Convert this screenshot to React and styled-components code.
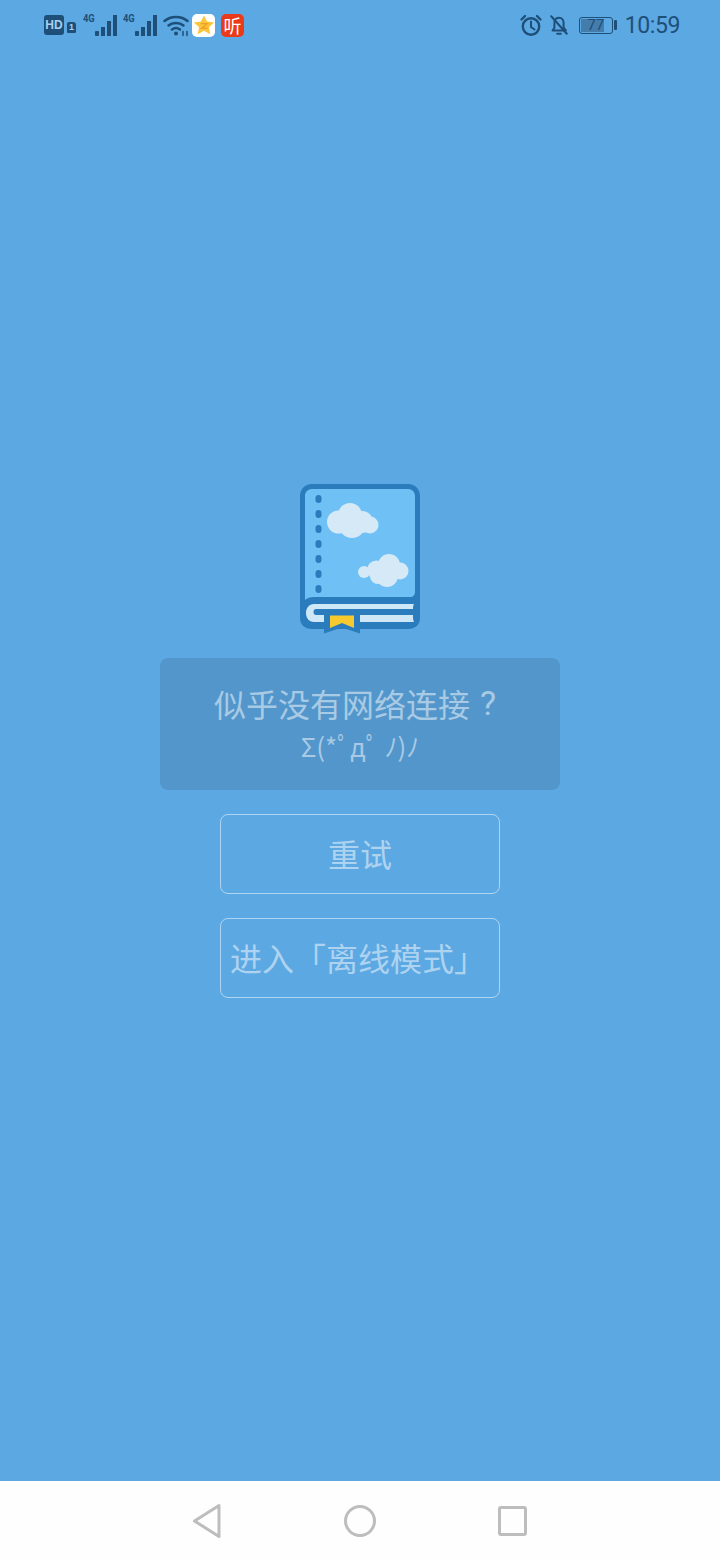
import styled, { createGlobalStyle } from 'styled-components';

const GlobalStyle = createGlobalStyle`
    html, body {
        margin: 0;
        padding: 0;
        background: #5ca8e2;
    }
`;

const CJK = `"Noto Sans CJK SC", "Noto Sans", sans-serif`;

const BookIcon = () => (
    <BookSvg width="120" height="150" viewBox="0 0 120 150">
        <path d="M12 0h96c7 0 12 5 12 12v122c0 7-5 11-12 11H12c-7 0-12-4-12-11V12C0 5 5 0 12 0z" fill="#2a7cbd" />
        <path d="M12 5h96c4 0 7 3 7 7v96c0 3-2 5-5 5H14c-4 0-7 1-9 3V12c0-4 3-7 7-7z" fill="#6fc0f5" />
        {[15, 30, 45, 60, 75, 90, 105].map((y) => (
            <rect key={y} x="15.500" y={y - 4} width="6" height="8" rx="3" fill="#2a7cbd" />
        ))}
        <g fill="#d5e9f7">
            <circle cx="38.500" cy="38" r="11.500" />
            <circle cx="50" cy="31" r="12" />
            <circle cx="52" cy="41" r="13" />
            <circle cx="62" cy="38" r="11" />
            <circle cx="70" cy="41" r="8.500" />
            <circle cx="64" cy="88" r="6" />
            <circle cx="76.500" cy="86" r="9.500" />
            <circle cx="89" cy="81" r="11" />
            <circle cx="78" cy="92" r="8" />
            <circle cx="87" cy="92" r="11" />
            <circle cx="100" cy="87" r="8.500" />
        </g>
        <path
            d="M114 120H14C9 120 6 124 6 129C6 134 9 138 14 138H24V131H16C14.500 131 13.500 130 13.500 128C13.500 126 14.500 125 16 125H113C113 123 113 122 114 120Z"
            fill="#cfe8f8"
        />
        <path d="M60 131H113C113 134 113 136 114 138H60Z" fill="#cfe8f8" />
        <path d="M24 128h36v21.500l-18-6-18 6z" fill="#2a7cbd" />
        <path d="M30 131.500h24v12.500l-12-5-12 5z" fill="#f6c92f" />
    </BookSvg>
);

const Signal = () => (
    <SignalWrap>
        <SmallTag>4G</SmallTag>
        <svg width="22" height="22" viewBox="0 0 22 22">
            <rect x="0" y="16" width="4" height="5" rx="1" fill="#1e4f78" />
            <rect x="6" y="12" width="4" height="9" fill="#1e4f78" />
            <rect x="12" y="6" width="4" height="15" fill="#1e4f78" />
            <rect x="18" y="0" width="4" height="21" fill="#1e4f78" />
        </svg>
    </SignalWrap>
);

const App = () => {
    return (
        <Screen>
            <GlobalStyle />
            <StatusBar>
                <LeftGroup>
                    <HdBadge>HD</HdBadge>
                    <SimTag>1</SimTag>
                    <Signal />
                    <Signal />
                    <WifiSvg width="26" height="24" viewBox="0 0 26 24" fill="none" stroke="#1e4f78" strokeWidth="2.500" strokeLinecap="round">
                        <path d="M1.500 8C7.500 2.500 18.500 2.500 24.500 8" />
                        <path d="M5.500 12.500c4-3.500 11-3.500 15 0" />
                        <path d="M9 16.500c2.300-1.700 5.700-1.700 8 0" />
                        <circle cx="13" cy="20.500" r="2" fill="#1e4f78" stroke="none" />
                        <path d="M20 18.500v4M24 18.500v4" strokeWidth="1.500" />
                    </WifiSvg>
                    <StarApp>
                        <svg width="22" height="22" viewBox="0 0 24 24">
                            <path d="M12 1.500l3.300 6.800 7.700 1-5.600 5.200 1.500 7.500-6.900-3.700-6.900 3.700 1.500-7.500L1 9.300l7.700-1z" fill="#fbc63a" />
                            <path d="M8.500 10.500h7l-6 5h6.500" fill="none" stroke="#f0a02a" strokeWidth="1.500" />
                        </svg>
                    </StarApp>
                    <ListenApp>听</ListenApp>
                </LeftGroup>
                <RightGroup>
                    <AlarmSvg width="24" height="24" viewBox="0 0 24 24" fill="none" stroke="#1e4f78" strokeWidth="2.400" strokeLinecap="round">
                        <circle cx="12" cy="13.500" r="8.200" />
                        <path d="M12 8.500v5.500l3.500 2.500" strokeWidth="2" />
                        <path d="M2.500 6.500L6 3M21.500 6.500L18 3" />
                    </AlarmSvg>
                    <svg width="22" height="24" viewBox="0 0 24 24" fill="none" stroke="#1e4f78" strokeWidth="2.200" strokeLinecap="round" strokeLinejoin="round">
                        <path d="M7 8.500C7.500 6 9.500 4 12 4c3 0 5 2.500 5 5.500V15l2.500 3H5l2-3V10" />
                        <path d="M10 21.500h4" />
                        <path d="M3.500 2.500l17 19" />
                    </svg>
                    <BatteryWrap>
                        <Battery>
                            <BatteryFill style={{ width: '77%' }} />
                            <BatteryText>77</BatteryText>
                        </Battery>
                        <BatteryCap />
                    </BatteryWrap>
                    <Clock>10:59</Clock>
                </RightGroup>
            </StatusBar>

            <Main>
                <BookIcon />
                <MessageCard>
                    <MessageTitle>
                        似乎没有网络连接<QuestionMark>?</QuestionMark>
                    </MessageTitle>
                    <Kaomoji>Σ(*ﾟдﾟ ﾉ)ﾉ</Kaomoji>
                </MessageCard>
                <OutlineButton>重试</OutlineButton>
                <OutlineButton $shift={4}>进入「离线模式」</OutlineButton>
            </Main>

            <NavBar>
                <svg width="30" height="36" viewBox="0 0 30 36" fill="none" stroke="#bdbdbd" strokeWidth="3" strokeLinejoin="round">
                    <path d="M26 2.500v31L1.500 18z" />
                </svg>
                <svg width="34" height="34" viewBox="0 0 34 34" fill="none" stroke="#bdbdbd" strokeWidth="3">
                    <circle cx="17" cy="17" r="14.500" />
                </svg>
                <svg width="30" height="30" viewBox="0 0 30 30" fill="none" stroke="#bdbdbd" strokeWidth="3" strokeLinejoin="round">
                    <rect x="2.500" y="1.500" width="26" height="27" rx="1.500" />
                </svg>
            </NavBar>
        </Screen>
    );
};

export default App;

const Screen = styled.div`
    width: 720px;
    height: 1560px;
    display: flex;
    flex-direction: column;
    background-color: #5ca8e2;
    overflow: hidden;
`;

const StatusBar = styled.div`
    height: 50px;
    padding: 0 40px 0 44px;
    display: flex;
    align-items: center;
    justify-content: space-between;
    color: #1e4f78;
`;

const LeftGroup = styled.div`
    display: flex;
    align-items: center;
    gap: 6px;
`;

const RightGroup = styled.div`
    display: flex;
    align-items: center;
    gap: 7px;
`;

const WifiSvg = styled.svg`
    margin-right: -3px;
`;

const AlarmSvg = styled.svg`
    margin-right: -2px;
`;

const BookSvg = styled.svg`
    display: block;
`;

const HdBadge = styled.span`
    width: 20px;
    height: 20px;
    border-radius: 3px;
    background-color: #1e4f78;
    color: #a9d0ee;
    font: bold 12px 'Liberation Sans', sans-serif;
    display: flex;
    align-items: center;
    justify-content: center;
    margin-right: -3px;
`;

const SimTag = styled.span`
    width: 9px;
    height: 11px;
    margin-top: 5px;
    margin-right: 1px;
    border-radius: 2px 3px 1px 1px;
    background-color: #1e4f78;
    color: #a9d0ee;
    font: bold 9px/11px 'Liberation Sans', sans-serif;
    text-align: center;
`;

const SignalWrap = styled.span`
    display: flex;
    align-items: flex-end;
    height: 23px;
`;

const SmallTag = styled.span`
    font: bold 11px/10px 'Roboto', sans-serif;
    align-self: flex-start;
    margin-right: -1px;
    width: 13px;
    transform: scaleX(0.85);
    transform-origin: left;
`;

const StarApp = styled.span`
    width: 23px;
    height: 23px;
    border-radius: 5px;
    background-color: #fff;
    display: flex;
    align-items: center;
    justify-content: center;
`;

const ListenApp = styled.span`
    width: 23px;
    height: 23px;
    border-radius: 5px;
    background-color: #ea3a1a;
    color: #fff;
    font: 18px/23px ${CJK};
    text-align: center;
`;

const BatteryWrap = styled.span`
    display: flex;
    align-items: center;
    gap: 1px;
    margin-left: 2px;
`;

const Battery = styled.span`
    position: relative;
    box-sizing: border-box;
    width: 34px;
    height: 17px;
    border: 1.500px solid #1e4f78;
    border-radius: 3px;
    padding: 1px;
    display: block;
`;

const BatteryFill = styled.span`
    display: block;
    height: 100%;
    background-color: #447cab;
`;

const BatteryText = styled.span`
    position: absolute;
    inset: 0;
    font: 15px/14px 'Roboto', sans-serif;
    text-align: center;
    color: #1e4f78;
`;

const BatteryCap = styled.span`
    width: 3px;
    height: 10px;
    background-color: #1e4f78;
    border-radius: 1px;
`;

const Clock = styled.span`
    font: 23px 'Roboto', sans-serif;
    letter-spacing: -0.400px;
    color: #1e4f78;
    margin-left: 1px;
`;

const Main = styled.main`
    flex: 1;
    padding-top: 434px;
    display: flex;
    flex-direction: column;
    align-items: center;
`;

const MessageCard = styled.div`
    width: 400px;
    height: 132px;
    margin-top: 24px;
    margin-bottom: 24px;
    border-radius: 8px;
    background-color: rgba(0, 0, 0, 0.1);
    color: rgba(255, 255, 255, 0.5);
    display: flex;
    flex-direction: column;
    align-items: center;
    justify-content: center;
    font-family: ${CJK};
`;

const MessageTitle = styled.div`
    font-size: 32px;
    line-height: 46px;
    margin-top: -2px;
    display: flex;
    align-items: center;
`;

const QuestionMark = styled.span`
    font: 34px 'Roboto', sans-serif;
    margin-left: 10px;
    margin-right: 10px;
`;

const Kaomoji = styled.div`
    font-size: 26px;
    line-height: 40px;
    margin-bottom: 1px;
`;

const OutlineButton = styled.button`
    width: 280px;
    height: 80px;
    margin-bottom: 24px;
    padding: 0 ${({ $shift }) => $shift || 0}px 2px 0;
    border: 1px solid rgba(255, 255, 255, 0.5);
    border-radius: 8px;
    background: transparent;
    color: rgba(255, 255, 255, 0.5);
    font: 32px ${CJK};
`;

const NavBar = styled.nav`
    height: 79px;
    background-color: #fefefe;
    display: flex;
    align-items: center;
    justify-content: center;
    gap: 120px;
`;
